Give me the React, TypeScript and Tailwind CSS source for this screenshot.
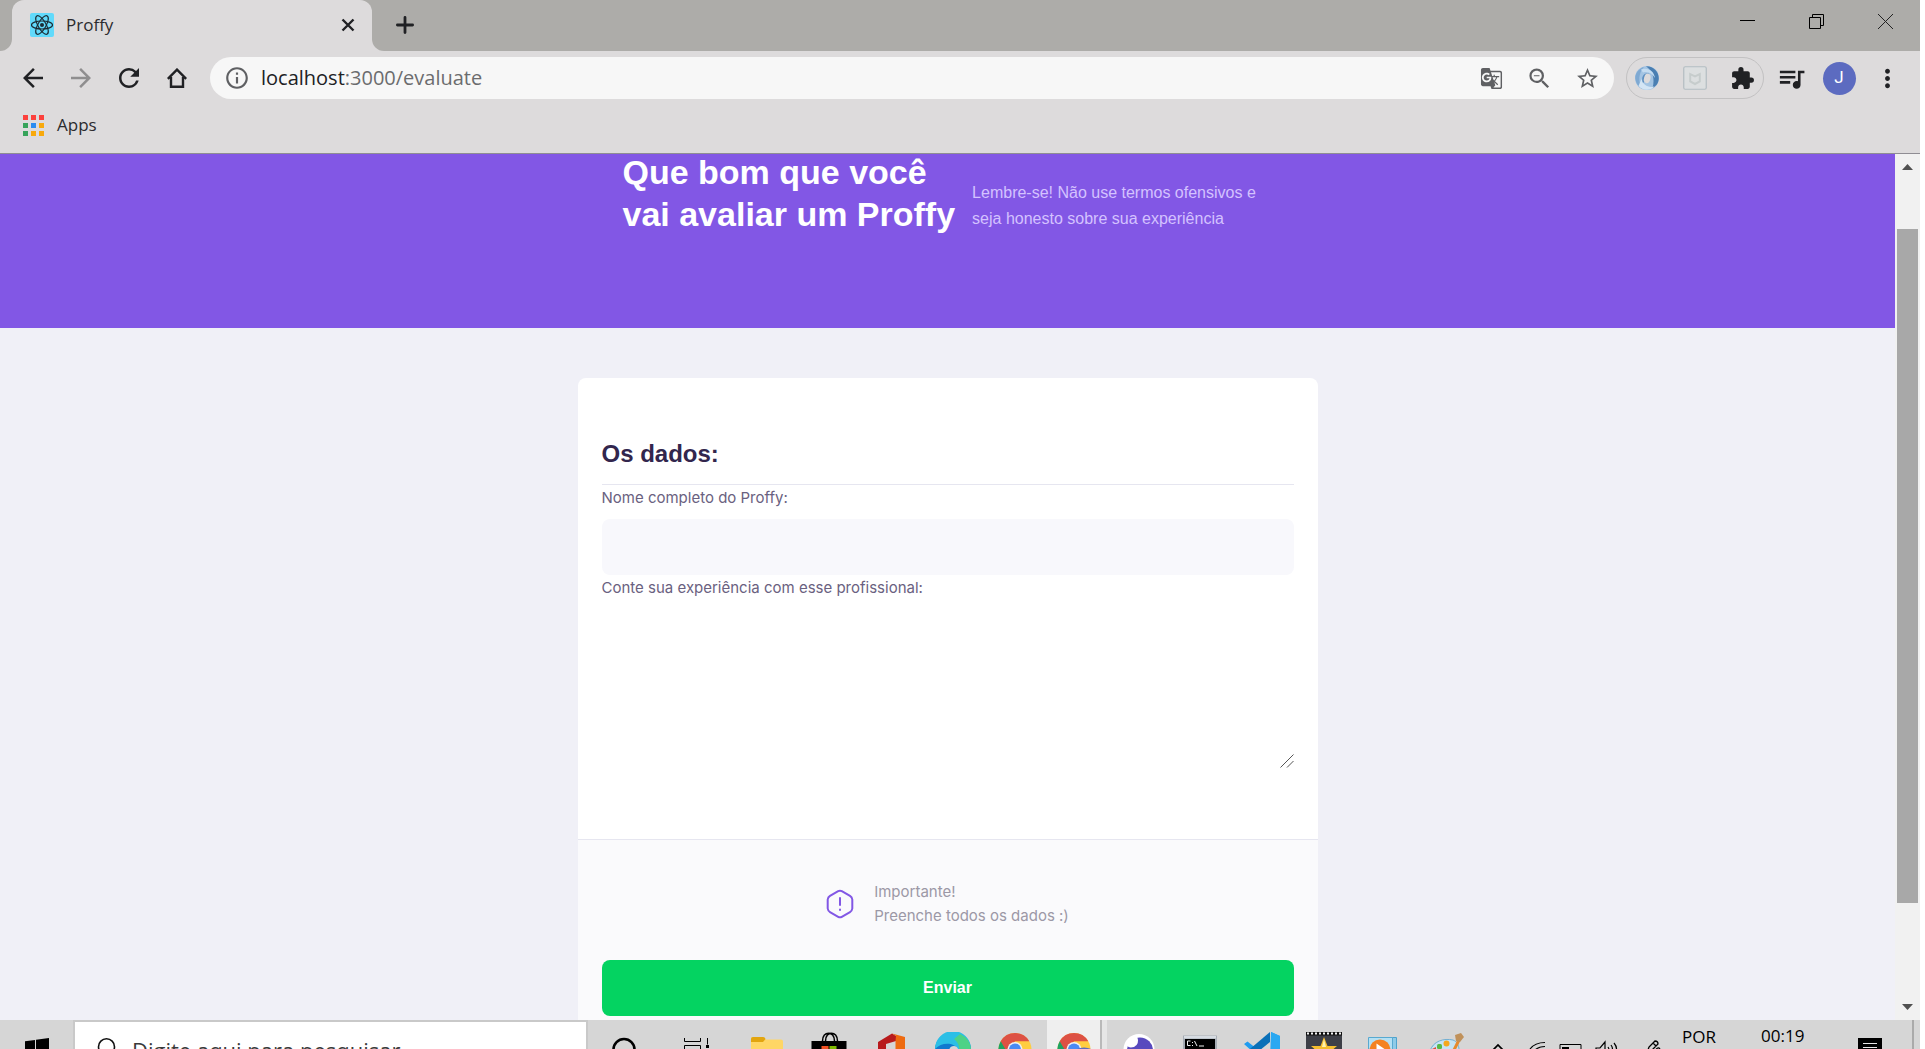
import type { ReactNode } from "react";
import {
  MdArrowBack,
  MdArrowForward,
  MdExtension,
  MdGTranslate,
  MdInfoOutline,
  MdMoreVert,
  MdQueueMusic,
  MdRefresh,
  MdStarBorder,
  MdZoomOut,
} from "react-icons/md";

function IconButton({ label, children }: { label: string; children: ReactNode }) {
  return (
    <button type="button" aria-label={label} className="flex h-10 w-12 shrink-0 items-center justify-center">
      {children}
    </button>
  );
}

function ReactLogo() {
  return (
    <svg viewBox="0 0 24 24" className="size-6 shrink-0">
      <rect width="24" height="24" rx="2" fill="#61dafb" />
      <g fill="none" stroke="#1c2b33" strokeWidth="1.2">
        <ellipse cx="12" cy="12" rx="10.5" ry="4" />
        <ellipse cx="12" cy="12" rx="10.5" ry="4" transform="rotate(60 12 12)" />
        <ellipse cx="12" cy="12" rx="10.5" ry="4" transform="rotate(120 12 12)" />
      </g>
      <circle cx="12" cy="12" r="2" fill="#1c2b33" />
    </svg>
  );
}

function TabStrip() {
  return (
    <div className="flex h-[51px] shrink-0 items-stretch bg-[#adaca9]">
      <div className="flex w-3 bg-[#dddbdc]">
        <div className="w-full rounded-br-xl bg-[#adaca9]" />
      </div>
      <div className="flex w-[360px] items-center rounded-t-xl bg-[#dddbdc] pb-0.5 pl-[18px] pr-[17px]">
        <ReactLogo />
        <span className="ml-3 flex-1 text-[17px] text-[#2b2b2e]">Proffy</span>
        <button type="button" aria-label="Close tab">
          <svg viewBox="0 0 14 14" className="size-3.5" stroke="#202124" strokeWidth="2.4">
            <path d="M1.5 1.5 12.5 12.5M12.5 1.5 1.5 12.5" />
          </svg>
        </button>
      </div>
      <div className="flex w-3 bg-[#dddbdc]">
        <div className="w-full rounded-bl-xl bg-[#adaca9]" />
      </div>
      <button type="button" aria-label="New tab" className="ml-3 flex items-center pb-0.5">
        <svg viewBox="0 0 18 18" className="size-[18px]" stroke="#202124" strokeWidth="2.8" strokeLinecap="round">
          <path d="M9 1.4V16.6M1.4 9H16.6" />
        </svg>
      </button>
      <div className="ml-auto flex h-[42px]">
        <button type="button" aria-label="Minimize" className="flex w-[69px] items-center justify-center">
          <svg viewBox="0 0 15 15" className="size-[15px]" fill="#000">
            <path d="M0 6H15V7H0Z" />
          </svg>
        </button>
        <button type="button" aria-label="Restore" className="flex w-[69px] items-center justify-center">
          <svg viewBox="0 0 15 15" className="size-[15px]" fill="none" stroke="#000">
            <path d="M.5 3.5H11.5V14.5H.5ZM3.5 3.5V.5H14.5V11.5H11.5" />
          </svg>
        </button>
        <button type="button" aria-label="Close" className="flex w-[69px] items-center justify-center">
          <svg viewBox="0 0 15 15" className="size-[15px]" stroke="#222">
            <path d="M0 0 15 15M15 0 0 15" />
          </svg>
        </button>
      </div>
    </div>
  );
}

function SwirlIcon() {
  return (
    <svg viewBox="0 0 24 24" className="size-6" fill="none">
      <circle cx="12" cy="12" r="12" fill="#a3c4e3" />
      <path d="M11 .2C20 0 25 8 23.500 14.500 23 18 20 21 17.500 22 20 13 18 5 11 .2Z" fill="#4a7fb2" />
      <path d="M9 .8C3 3 0 8 .3 12.500 1 18 4 21.500 7 22.800 3 16 3.500 7 9 .8Z" fill="#7fa9d2" />
      <path d="M3.500 20C8 25 15 25 19.500 20.500 13 22 8 19 6.500 13Z" fill="#d3e5f5" />
      <path d="M6 3.500C13 1 19 5 20 12 17 7 13 5 8 6.500Z" fill="#c4dcf1" />
      <path d="M8 17C5.500 11 9 6 14.500 7.500 11 8 9.500 11 10 15Z" fill="#5d8fc0" />
      <ellipse cx="12.300" cy="12.300" rx="3.200" ry="4.800" fill="#dddbdc" transform="rotate(15 12 12)" />
    </svg>
  );
}

function ShieldIcon() {
  return (
    <svg viewBox="0 0 24 24" className="size-6" fill="none">
      <rect x=".75" y=".75" width="22.500" height="22.500" rx="1.500" fill="#dcdfe0" stroke="#b3bdc2" strokeWidth="1.200" />
      <path d="M7.200 8.200 12 10.500 16.800 8.200V15.500L12 18 7.200 15.500Z" stroke="#c6cccc" strokeWidth="2" />
    </svg>
  );
}

function Toolbar() {
  return (
    <div className="flex shrink-0 items-center py-1.5 pl-[9px] pr-[9px]">
      <IconButton label="Back"><MdArrowBack className="size-[30px] text-[#202124]" /></IconButton>
      <IconButton label="Forward"><MdArrowForward className="size-[30px] text-[#8f8e8f]" /></IconButton>
      <IconButton label="Reload"><MdRefresh className="size-[30px] text-[#202124]" /></IconButton>
      <IconButton label="Home">
        <svg viewBox="0 0 20 20" className="size-5" fill="none" stroke="#202124" strokeWidth="2.400">
          <path d="M.8 10.800 10 1.600 19.200 10.800M4 9V18.700H16V9" />
        </svg>
      </IconButton>
      <div className="ml-[9px] flex h-[42px] min-w-0 flex-1 items-center rounded-full bg-[#f7f7f7] pl-[14px] pr-[3px]">
        <MdInfoOutline className="size-[26px] shrink-0 text-[#5f6063]" />
        <div role="textbox" aria-label="Address" className="ml-[11px] flex-1 text-[20px] text-[#6b6c6e]">
          <span className="text-[#202124]">localhost</span>:3000/evaluate
        </div>
        <IconButton label="Translate"><MdGTranslate className="size-[23px] text-[#5f6063]" /></IconButton>
        <IconButton label="Zoom"><MdZoomOut className="size-[27px] text-[#5f6063]" /></IconButton>
        <IconButton label="Bookmark"><MdStarBorder className="size-[25px] text-[#5f6063]" /></IconButton>
      </div>
      <div className="ml-3 mr-[3px] flex h-[42px] items-center rounded-full border border-[#c2c1c2]">
        <button type="button" aria-label="Extension" className="flex w-11 items-center justify-center pr-1"><SwirlIcon /></button>
        <IconButton label="Site advisor"><ShieldIcon /></IconButton>
        <button type="button" aria-label="Extensions" className="flex w-11 items-center justify-center pl-0.5">
          <MdExtension className="size-[25px] text-[#202124]" />
        </button>
      </div>
      <IconButton label="Media"><MdQueueMusic className="size-[31px] text-[#202124]" /></IconButton>
      <IconButton label="Profile">
        <span className="flex size-[33px] items-center justify-center rounded-full bg-[#5c6bc0] font-['Roboto',sans-serif] text-[17px] text-white">J</span>
      </IconButton>
      <IconButton label="Menu"><MdMoreVert className="size-[29px] text-[#202124]" /></IconButton>
    </div>
  );
}

const appDots = [
  "bg-[#fc413d]", "bg-[#fc413d]", "bg-[#fc413d]",
  "bg-[#36a35a]", "bg-[#2b8cf0]", "bg-[#f8a90c]",
  "bg-[#36a35a]", "bg-[#f8a90c]", "bg-[#f8a90c]",
];

function BookmarksBar() {
  return (
    <div className="flex h-[49px] shrink-0 items-center border-b border-[#8f8d93] pb-2 pl-[23px]">
      <a href="#apps" className="flex items-center gap-[13px] text-[17px] text-[#2b2b2e]">
        <span className="grid grid-cols-3 gap-[3px]">
          {appDots.map((dot, index) => (
            <span key={index} className={`size-[5px] ${dot}`} />
          ))}
        </span>
        Apps
      </a>
    </div>
  );
}

function WarningIcon() {
  return (
    <svg viewBox="0 0 28 30" className="h-[30px] w-7 shrink-0" fill="none" stroke="#8257e5" strokeWidth="2" strokeLinecap="round">
      <path d="M12.200 2.200Q14 1.200 15.800 2.200L24 6.900Q26 8.100 26.300 10.500V19.500Q26 21.900 24 23.100L15.800 27.800Q14 28.800 12.200 27.800L4 23.100Q2 21.900 1.700 19.500V10.500Q2 8.100 4 6.900Z" />
      <path d="M14 9V16" />
      <path d="M14 20.600V21" />
    </svg>
  );
}

function EvaluatePage() {
  return (
    <div className="min-w-0 flex-1 overflow-hidden bg-[#f0f0f7] font-['Liberation_Sans',sans-serif]">
      <header className="h-[174px] bg-[#8257e5]">
        <div className="mx-auto flex w-[650px] gap-[17px]">
          <h1 className="-mt-[3px] shrink-0 text-[34px] font-bold leading-[42px] text-white">
            Que bom que você<br />vai avaliar um Proffy
          </h1>
          <p className="pt-[26px] text-[16px] leading-[26px] text-[#d4c2ff]">
            Lembre-se! Não use termos ofensivos e<br />seja honesto sobre sua experiência
          </p>
        </div>
      </header>
      <form className="mx-auto mt-[50px] w-[740px] rounded-lg bg-white" onSubmit={(event) => event.preventDefault()}>
        <fieldset className="px-6 pt-[60px]">
          <legend className="contents">
            <span className="block border-b border-[#e6e6f0] pb-[14px] text-[24px] font-bold leading-8 text-[#32264d]">Os dados:</span>
          </legend>
          <label htmlFor="name" className="block pt-px font-['Inter',sans-serif] text-[15px] leading-6 text-[#6a6180]">
            Nome completo do Proffy:
          </label>
          <input id="name" type="text" className="mt-[9px] h-14 w-full rounded-lg bg-[#f8f8fc] px-4 outline-none" />
          <label htmlFor="experience" className="block pt-px font-['Inter',sans-serif] text-[15px] leading-6 text-[#6a6180]">
            Conte sua experiência com esse profissional:
          </label>
          <div className="relative mt-2.5">
            <textarea id="experience" className="block h-[160px] w-full resize-none bg-white outline-none" />
            <svg viewBox="0 0 14 14" className="absolute bottom-0.5 right-0 size-3.5" stroke="#555" fill="none">
              <path d="M.5 13.500 13.500 .5M7 13.500 13.500 7" />
            </svg>
          </div>
        </fieldset>
        <footer className="mt-[69px] border-t border-[#e6e6f0] bg-[#fafafc] px-6 pb-10 pt-10">
          <div className="flex items-center justify-center gap-5">
            <WarningIcon />
            <p className="font-['Inter',sans-serif] text-[15px] leading-6 text-[#9c98a6]">
              Importante!<br />Preenche todos os dados :)
            </p>
          </div>
          <button type="submit" className="mt-8 h-14 w-full rounded-lg bg-[#04d361] text-[16px] font-bold text-white">Enviar</button>
        </footer>
      </form>
    </div>
  );
}

function Scrollbar() {
  return (
    <div className="flex w-[25px] shrink-0 flex-col items-center bg-[#f1f1f1] py-2.5">
      <svg viewBox="0 0 11 6" className="h-1.5 w-[11px]" fill="#505050"><path d="M5.500 0 11 6H0Z" /></svg>
      <div className="mt-[59px] h-[674px] w-[21px] bg-[#a8a8a8]" />
      <svg viewBox="0 0 11 6" className="mt-auto h-1.5 w-[11px]" fill="#505050"><path d="M0 0H11L5.500 6Z" /></svg>
    </div>
  );
}

function TaskButton({ label, wide, active, children }: { label: string; wide?: boolean; active?: boolean; children: ReactNode }) {
  return (
    <button
      type="button"
      aria-label={label}
      className={`flex shrink-0 justify-center pt-3 ${wide ? "w-[74px]" : "w-[62px]"} ${active ? "bg-[#efefef]" : ""}`}
    >
      <svg viewBox="0 0 36 36" className="size-9">{children}</svg>
    </button>
  );
}

function ChromeShape() {
  return (
    <>
      <circle cx="18" cy="17.500" r="16.500" fill="#ffcd40" />
      <path d="M18 17.500 3.700 9.250A16.500 16.500 0 0 0 18 34Z" fill="#1ea362" />
      <path d="M3.700 9.250A16.500 16.500 0 0 1 32.300 9.250H18L10 20Z" fill="#dd5144" />
      <circle cx="18" cy="17.500" r="7.600" fill="#f1f1f1" />
      <circle cx="18" cy="17.500" r="6" fill="#4a8af4" />
    </>
  );
}

function Taskbar() {
  return (
    <div className="flex h-[29px] shrink-0 overflow-hidden bg-[#d6d6d6]">
      <button type="button" aria-label="Start" className="flex w-[73px] shrink-0 justify-center pt-[18px]">
        <svg viewBox="0 0 24 24" className="size-6" fill="#000">
          <path d="M0 3.200 10 1.900V11.500H0ZM11 1.700 24 0V11.500H11ZM0 12.500H10V22L0 20.800ZM11 12.500H24V24L11 22.300Z" />
        </svg>
      </button>
      <div className="flex h-[60px] w-[515px] shrink-0 items-start border-2 border-[#c9c9c9] bg-white pl-[22px] pt-4">
        <svg viewBox="0 0 22 26" className="h-[26px] w-[22px] shrink-0" fill="none" stroke="#111" strokeWidth="1.600">
          <circle cx="9.500" cy="8.800" r="8" />
          <path d="M4.500 15 .8 24" />
        </svg>
        <input
          type="text"
          aria-label="Digite aqui para pesquisar"
          placeholder="Digite aqui para pesquisar"
          className="-mt-0.5 ml-[13px] h-7 min-w-0 flex-1 text-[22px] leading-7 outline-none placeholder:text-[#3a3a3a]"
        />
      </div>
      <div className="flex w-[459px] shrink-0 items-start">
        <TaskButton label="Cortana" wide><circle cx="17" cy="17.500" r="10.500" fill="none" stroke="#000" strokeWidth="2.600" /></TaskButton>
        <TaskButton label="Task view" wide>
          <path d="M3.500 6V9.500H19.500V6M3.500 17V13.500H19.500V17M26.500 6V12.500M26.500 17V30" fill="none" stroke="#000" />
          <path d="M25 13H28V16H25Z" />
        </TaskButton>
        <TaskButton label="File explorer">
          <path d="M2 7Q2 5 4 5H14L17 7.500H32Q34 7.500 34 9.500V28H2Z" fill="#ffd665" />
          <path d="M2 7Q2 5 4 5H14Q16 5 16.500 7L14 10H2Z" fill="#e2a50f" />
        </TaskButton>
        <TaskButton label="Store">
          <path d="M11.500 9C11.500-1.500 23.500-1.500 23.500 9M14.500 9C14.500-1.500 26.500-1.500 26.500 9" fill="none" stroke="#000" strokeWidth="1.500" />
          <path d="M.5 9H35.500V34H.5Z" />
          <path d="M10.500 14H17.500V21H10.500Z" fill="#f25022" />
          <path d="M18.500 14H25.500V21H18.500Z" fill="#7fba00" />
        </TaskButton>
        <TaskButton label="Office">
          <path d="M5 10 19 1.500 23 4V9L13 12V26L5 29Z" fill="#b81a1c" />
          <path d="M19 1.500 32 5V30L19 34V28L22.500 27V9L23 4Z" fill="#ee6a10" />
        </TaskButton>
        <TaskButton label="Edge">
          <circle cx="18" cy="18" r="18" fill="#1079cf" />
          <path d="M0 17A18 18 0 0 1 36 17C36 22 29 24 24 21 24 11 8 8 0 17Z" fill="#2bbfe6" />
          <path d="M25 2Q36 7 36 18C35 23 29 24 24 21 25 14 23 10 19 7Z" fill="#5ad865" opacity=".75" />
          <path d="M14 20Q14 14 19 14 23 14 24 20Z" fill="#d6d6d6" />
        </TaskButton>
        <TaskButton label="Chrome"><ChromeShape /></TaskButton>
      </div>
      <div className="flex w-[53px] shrink-0 justify-center overflow-hidden">
        <TaskButton label="Chrome, profile" active>
          <ChromeShape />
          <ellipse cx="28" cy="22" rx="11" ry="6.500" fill="#5c6bc0" />
        </TaskButton>
      </div>
      <div className="w-[7px] shrink-0 border-l-2 border-[#b9b9b9] bg-[#e6e6e6]" />
      <div className="flex shrink-0 items-start">
        <TaskButton label="Browser">
          <circle cx="19" cy="17.500" r="15.500" fill="#fff" />
          <circle cx="20" cy="18.500" r="13" fill="#5849be" />
          <path d="M17 4Q20 12 14 15 6 17 6 10Z" fill="#fff" />
        </TaskButton>
        <TaskButton label="Command prompt">
          <rect x="1" y="3.500" width="34" height="30" fill="#a7adb5" />
          <path d="M2 4H34V6.500H2Z" fill="#d7dce2" />
          <path d="M3 7H33V32H3Z" fill="#000" />
          <path d="M8.500 9H5.500V13.500H8.500M10.500 10V11M10.500 13V14M12.500 9 15 14M17 14H22" fill="none" stroke="#eee" />
        </TaskButton>
        <TaskButton label="Code editor">
          <path d="M27 0 36 4V32L27 36 0 12 3.500 9.500 27 28Z" fill="#1f9cf0" />
          <path d="M26 0V10L5 27 0 22Z" fill="#0a70b8" />
          <path d="M27 0 36 4V32L26 28Z" fill="#29a8f2" />
        </TaskButton>
        <TaskButton label="Movie maker">
          <rect width="36" height="36" fill="#3d3f47" />
          <path d="M0 0H36V3.500H0Z" fill="#111" />
          <path d="M1 1.500H36" stroke="#f4f4f4" strokeWidth="2" strokeDasharray="2 2" />
          <path d="M18 5 21.500 14H31L24 20 27 30 18 24 9 30 12 20 5 14H14.500Z" fill="#f5bd2e" />
          <path d="M18 7 20 15H16Z" fill="#fff3ae" />
        </TaskButton>
        <TaskButton label="Media player">
          <path d="M5 5.500H28.500V30H5Z" fill="#8fcbe8" stroke="#4fa3cd" />
          <path d="M.5 5.500H24.500V32H.5Z" fill="#b5e0f3" stroke="#58a9d0" />
          <circle cx="12" cy="18" r="10.500" fill="#f58220" />
          <path d="M8.500 11.500 18 18 8.500 24Z" fill="#fff" />
        </TaskButton>
        <TaskButton label="Paint">
          <path d="M0 19C3 9 14 6 23 8 31 11 31 24 23 30 12 35-2 30 0 19Z" fill="#c6e4f5" stroke="#72afd2" />
          <rect x="7" y="12" width="5" height="5" rx="1.500" fill="#58b947" />
          <circle cx="16.500" cy="11.500" r="3" fill="#f5a81c" />
          <path d="M2 17 6 15V19Z" fill="#e04e39" />
          <path d="M29 8 22 22" stroke="#e58a2e" strokeWidth="3" />
          <path d="M25 3 31 1 34 5 30 10 26 9Z" fill="#c0915a" />
        </TaskButton>
      </div>
      <div className="ml-auto flex shrink-0 items-start">
        <svg viewBox="0 0 24 29" className="mr-4 h-[29px] w-6" fill="none" stroke="#000" strokeWidth="1.700"><path d="M6 31 12 25 18 31" /></svg>
        <svg viewBox="0 0 24 29" className="mr-2 h-[29px] w-6" fill="none" stroke="#000" strokeWidth="1.200">
          <path d="M4 29Q9 22.500 19 22.500M8 31Q12 26.500 19 26.500" />
        </svg>
        <svg viewBox="0 0 24 29" className="mr-3 h-[29px] w-6" fill="none" stroke="#000"><path d="M2 34V24.500H23V34" /><path d="M4 27H11V34H4Z" fill="#000" stroke="none" /></svg>
        <svg viewBox="0 0 26 29" className="mr-6 h-[29px] w-[26px]" fill="none" stroke="#000" strokeWidth="1.200">
          <path d="M2 32V28H6L11 22V34M14 27Q16 30 14 33M17 25Q20 29 17 33M20 23Q25 29 20 34" />
        </svg>
        <svg viewBox="0 0 18 29" className="mr-5 h-[29px] w-[18px]" fill="none" stroke="#000" strokeWidth="1.300">
          <path d="M3 33 5 27 11 21Q14 21 14 24L8 30M9 23 12 26M11 31Q14 26 16 29" />
        </svg>
        <span className="mt-[5px] w-[79px] text-[17px] leading-6 text-black">POR</span>
        <time className="mt-1 w-[97px] text-[17px] leading-6 text-black">00:19</time>
        <button type="button" aria-label="Notifications" className="mr-[30px] mt-[18px]">
          <svg viewBox="0 0 24 24" className="size-6"><path d="M0 0H24V20H16L12 24V20H0Z" /><path d="M5 5.500H19M5 9.500H19M5 13.500H19" stroke="#e6e6e6" /></svg>
        </button>
        <div className="h-[60px] w-2 border-l-2 border-[#aaa]" />
      </div>
    </div>
  );
}

export default function App() {
  return (
    <div className="h-screen bg-white pr-[5px] font-['Open_Sans','Noto_Sans',sans-serif]">
      <div className="flex h-full flex-col overflow-hidden bg-[#dddbdc]">
        <TabStrip />
        <Toolbar />
        <BookmarksBar />
        <main className="flex min-h-0 flex-1">
          <EvaluatePage />
          <Scrollbar />
        </main>
        <Taskbar />
      </div>
    </div>
  );
}
